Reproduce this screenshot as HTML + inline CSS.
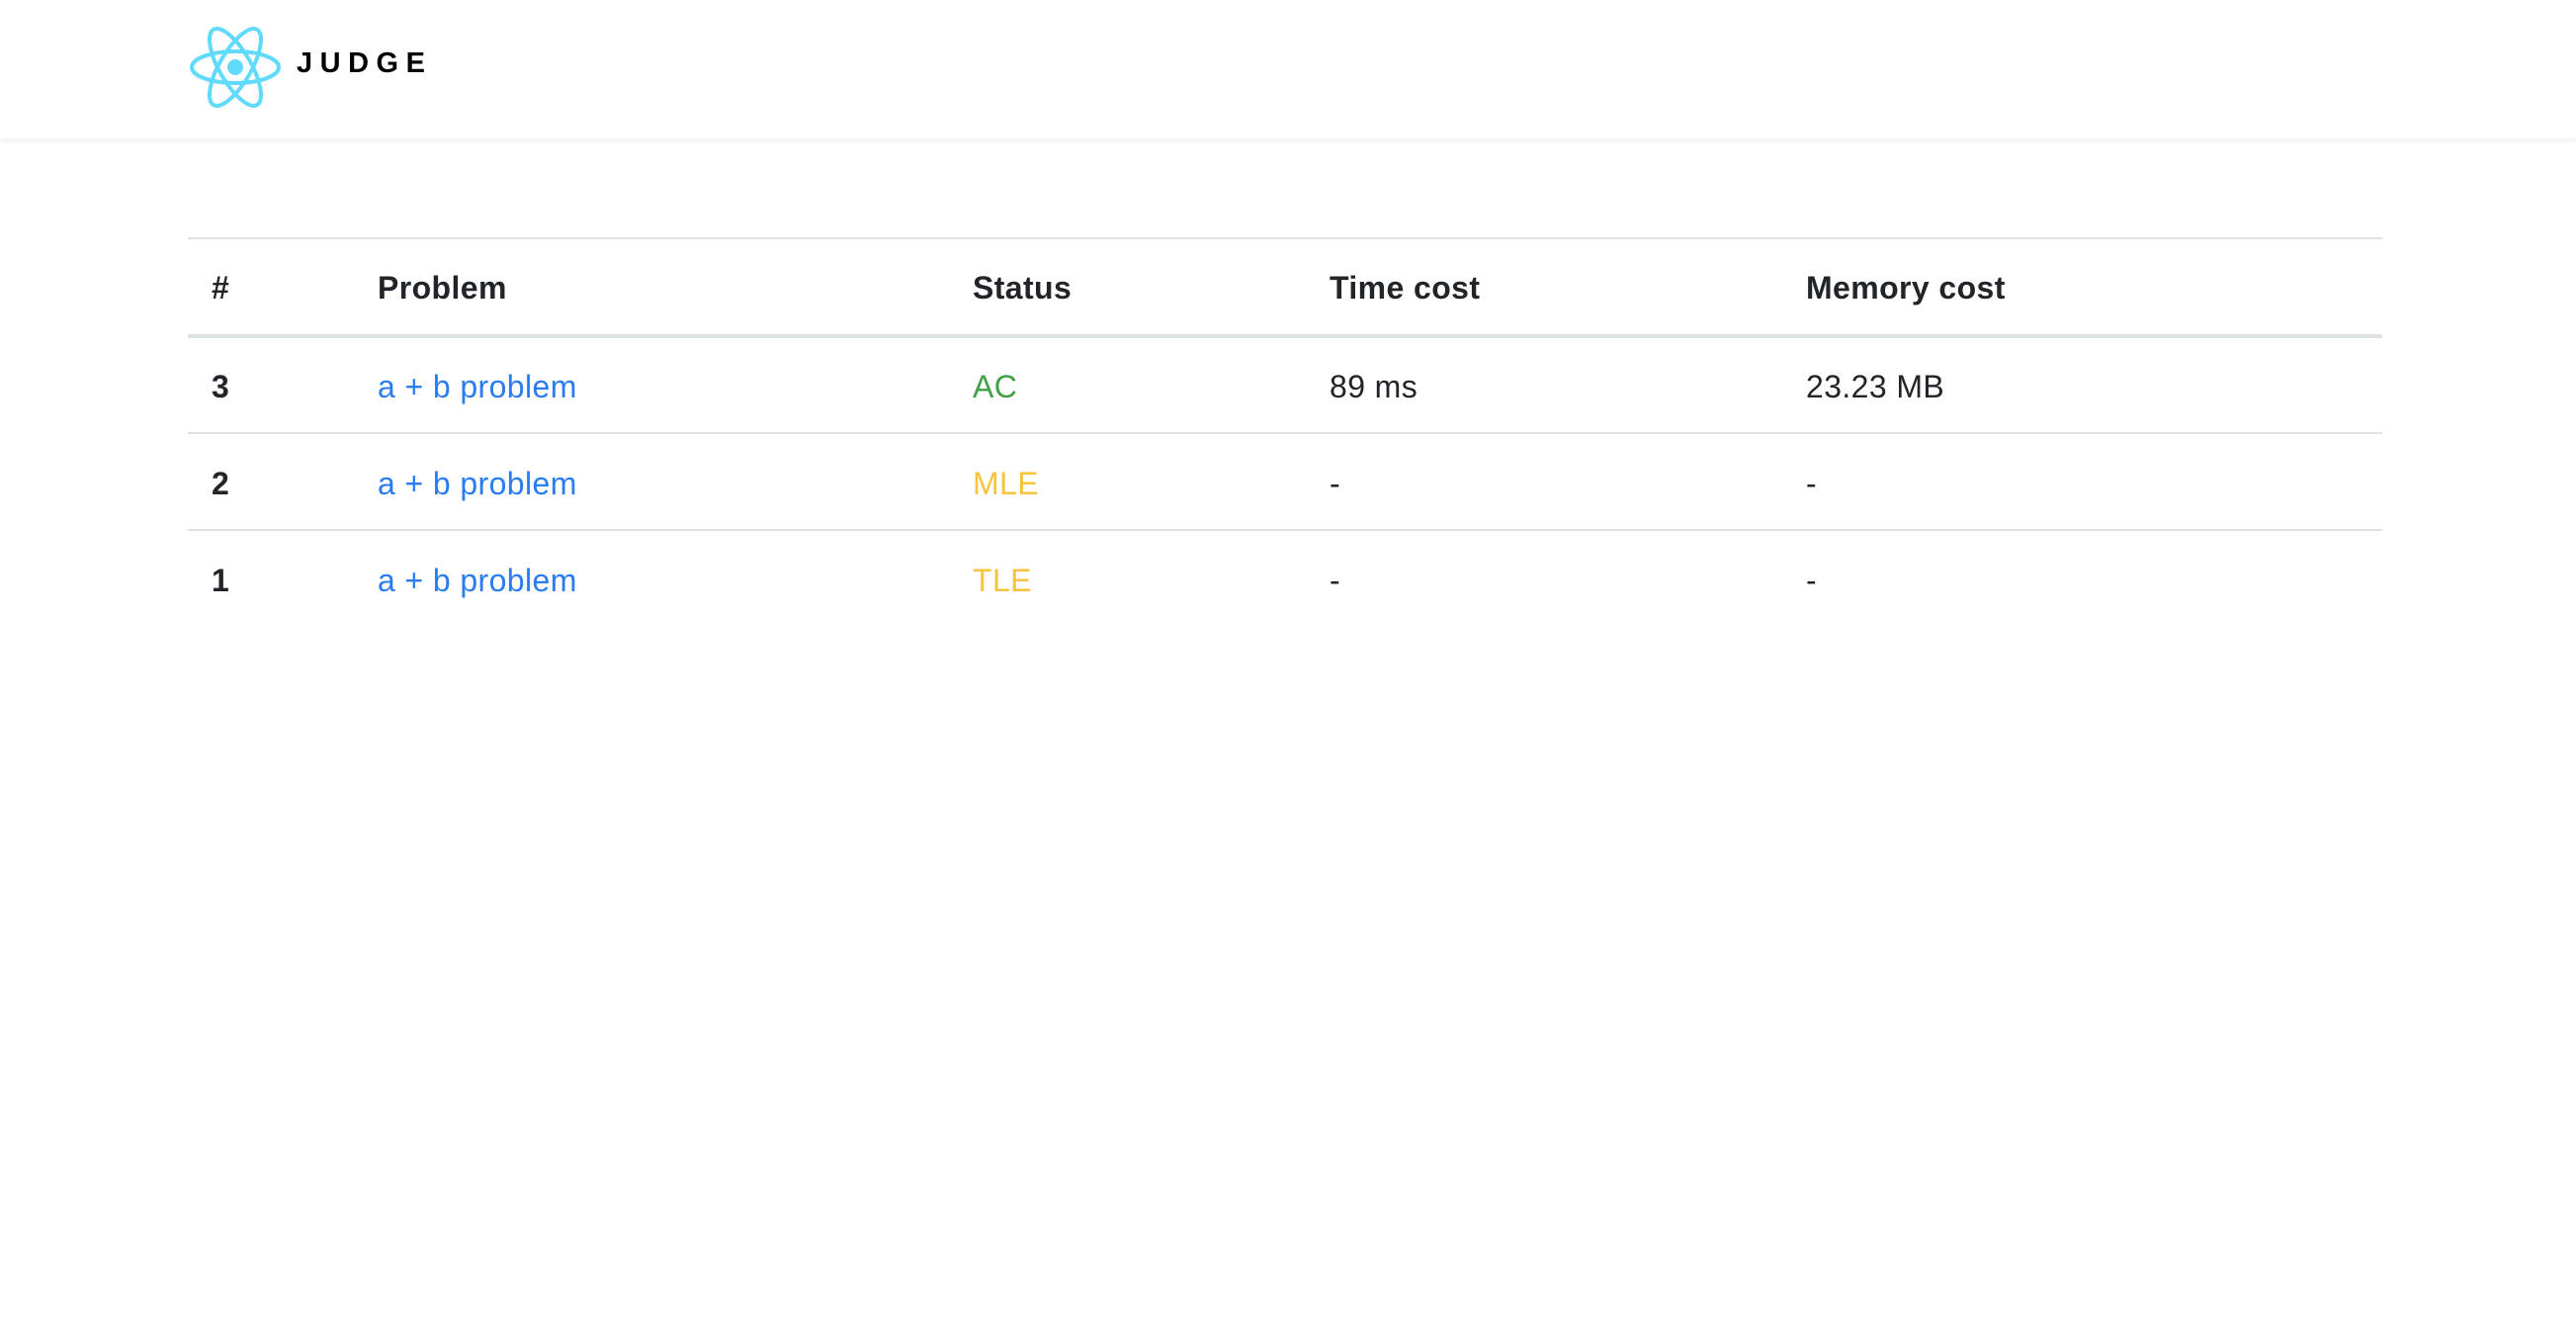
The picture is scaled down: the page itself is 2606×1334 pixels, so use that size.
<!DOCTYPE html>
<html><head><meta charset="utf-8"><style>
body{margin:0;width:2606px;height:1334px;background:#fff;font-family:"Liberation Sans",Arial,sans-serif;color:#212529;position:relative;overflow:hidden}
.hdr{position:absolute;left:0;top:0;width:2606px;height:140px;background:#fff;box-shadow:0 2px 6px rgba(0,0,0,0.08)}
.brand{position:absolute;left:300px;top:48px;font-size:29px;font-weight:bold;letter-spacing:7.5px;color:#000}
.line{position:absolute;left:190px;width:2220px;background:#dee2e6}
.t{position:absolute;font-size:32px;line-height:36px;letter-spacing:0.4px}
.b{font-weight:bold}
.lk{color:#2a7cf2}.ac{color:#43a047}.y{color:#f9c33d}
</style></head><body>
<div class="hdr">
<svg style="position:absolute;left:191px;top:25px" width="94" height="86" viewBox="-47 -43 94 86">
<g fill="none" stroke="#61dafb" stroke-width="4">
<ellipse rx="44" ry="16"/>
<ellipse rx="44" ry="16" transform="rotate(60)"/>
<ellipse rx="44" ry="16" transform="rotate(120)"/>
</g><circle r="8" fill="#61dafb"/></svg>
<div class="brand">JUDGE</div>
</div>
<div class="line" style="top:240px;height:2px"></div>
<div class="line" style="top:338px;height:4px"></div>
<div class="line" style="top:437px;height:2px"></div>
<div class="line" style="top:535px;height:2px"></div>
<div class="t b" style="left:214px;top:273px">#</div>
<div class="t b" style="left:382px;top:273px">Problem</div>
<div class="t b" style="left:984px;top:273px">Status</div>
<div class="t b" style="left:1345px;top:273px">Time cost</div>
<div class="t b" style="left:1827px;top:273px">Memory cost</div>

<div class="t b" style="left:214px;top:373px">3</div>
<div class="t lk" style="left:382px;top:373px">a + b problem</div>
<div class="t ac" style="left:984px;top:373px">AC</div>
<div class="t" style="left:1345px;top:373px">89 ms</div>
<div class="t" style="left:1827px;top:373px">23.23 MB</div>

<div class="t b" style="left:214px;top:471px">2</div>
<div class="t lk" style="left:382px;top:471px">a + b problem</div>
<div class="t y" style="left:984px;top:471px">MLE</div>
<div class="t" style="left:1345px;top:471px">-</div>
<div class="t" style="left:1827px;top:471px">-</div>

<div class="t b" style="left:214px;top:569px">1</div>
<div class="t lk" style="left:382px;top:569px">a + b problem</div>
<div class="t y" style="left:984px;top:569px">TLE</div>
<div class="t" style="left:1345px;top:569px">-</div>
<div class="t" style="left:1827px;top:569px">-</div>
</body></html>
